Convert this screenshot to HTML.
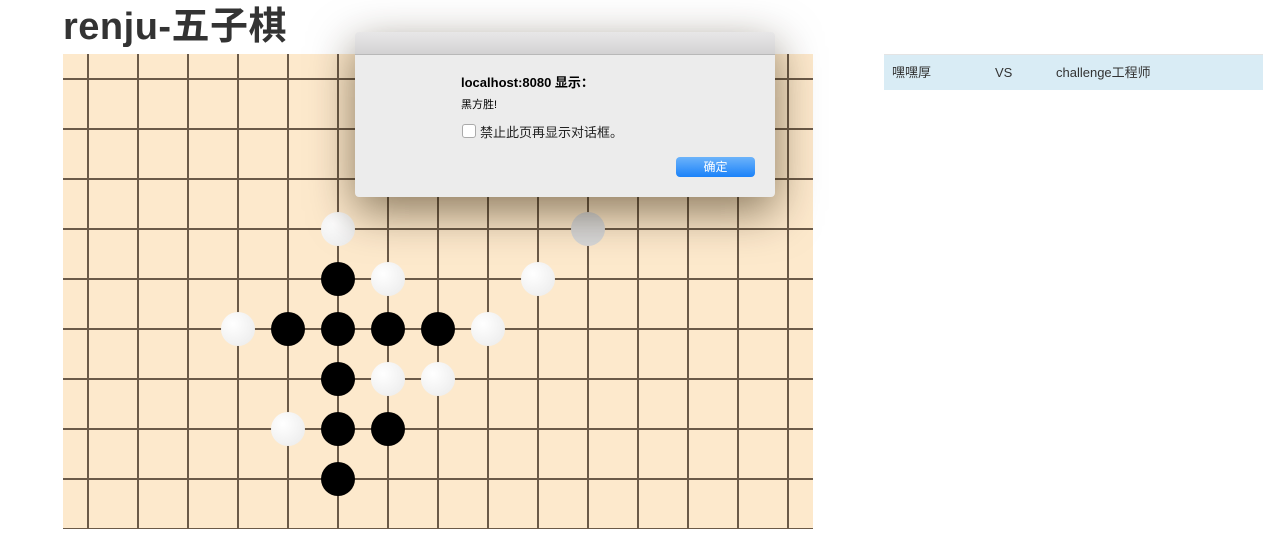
<!DOCTYPE html>
<html><head><meta charset="utf-8"><style>
body{margin:0;width:1267px;height:529px;background:#fff;overflow:hidden;position:relative;font-family:"Liberation Sans","Noto Sans CJK SC",sans-serif}
h1{position:absolute;left:63px;top:5px;margin:0;font-size:38px;font-weight:bold;color:#333;line-height:44px;letter-spacing:0.5px}
#board{position:absolute;left:63px;top:54px;width:750px;height:475px;background:#fde9cc}
.p{position:absolute;left:884px;top:54px;width:379px;height:36px;background:#d9ecf5;font-size:13px;color:#333;border-top:1px solid #e4e4e4;box-sizing:border-box}
.p span{position:absolute;top:0;line-height:36px;height:36px}
.dlg{position:absolute;left:355px;top:32px;width:420px;height:165px;background:#ececec;border-radius:4px;box-shadow:0 14px 45px rgba(40,25,0,.55);overflow:hidden}
.tb{height:22px;background:linear-gradient(#e8e7e8,#d3d2d3);border-bottom:1px solid #b8b8b8}
.btn{position:absolute;left:321px;top:125px;width:79px;height:20px;border-radius:4px;background:linear-gradient(#6cb3fa,#1b82f9);color:#fff;font-size:12px;text-align:center;line-height:20px}
</style></head><body>
<h1>renju-五子棋</h1>
<div id="board"><svg width="750" height="475">
<defs><radialGradient id="w" cx="0.35" cy="0.35" r="0.8"><stop offset="0" stop-color="#fff"/><stop offset="1" stop-color="#ececec"/></radialGradient></defs>
<g stroke="#6b5a48" stroke-width="2">
<line x1="25" y1="0" x2="25" y2="475"/><line x1="75" y1="0" x2="75" y2="475"/><line x1="125" y1="0" x2="125" y2="475"/><line x1="175" y1="0" x2="175" y2="475"/><line x1="225" y1="0" x2="225" y2="475"/><line x1="275" y1="0" x2="275" y2="475"/><line x1="325" y1="0" x2="325" y2="475"/><line x1="375" y1="0" x2="375" y2="475"/><line x1="425" y1="0" x2="425" y2="475"/><line x1="475" y1="0" x2="475" y2="475"/><line x1="525" y1="0" x2="525" y2="475"/><line x1="575" y1="0" x2="575" y2="475"/><line x1="625" y1="0" x2="625" y2="475"/><line x1="675" y1="0" x2="675" y2="475"/><line x1="725" y1="0" x2="725" y2="475"/>
<line x1="0" y1="25" x2="750" y2="25"/><line x1="0" y1="75" x2="750" y2="75"/><line x1="0" y1="125" x2="750" y2="125"/><line x1="0" y1="175" x2="750" y2="175"/><line x1="0" y1="225" x2="750" y2="225"/><line x1="0" y1="275" x2="750" y2="275"/><line x1="0" y1="325" x2="750" y2="325"/><line x1="0" y1="375" x2="750" y2="375"/><line x1="0" y1="425" x2="750" y2="425"/><line x1="0" y1="475" x2="750" y2="475"/>
</g>
<g fill="url(#w)"><circle cx="275" cy="175" r="17"/><circle cx="525" cy="175" r="17" fill="#d8d8d8"/><circle cx="325" cy="225" r="17"/><circle cx="475" cy="225" r="17"/><circle cx="175" cy="275" r="17"/><circle cx="425" cy="275" r="17"/><circle cx="325" cy="325" r="17"/><circle cx="375" cy="325" r="17"/><circle cx="225" cy="375" r="17"/></g>
<g fill="#000"><circle cx="275" cy="225" r="17"/><circle cx="225" cy="275" r="17"/><circle cx="275" cy="275" r="17"/><circle cx="325" cy="275" r="17"/><circle cx="375" cy="275" r="17"/><circle cx="275" cy="325" r="17"/><circle cx="275" cy="375" r="17"/><circle cx="325" cy="375" r="17"/><circle cx="275" cy="425" r="17"/></g>
</svg></div>
<div class="p"><span style="left:8px">嘿嘿厚</span><span style="left:111px">VS</span><span style="left:172px">challenge工程师</span></div>
<div class="dlg"><div class="tb"></div>
<div style="position:absolute;left:106px;top:40px;font-size:13px;font-weight:bold;color:#000">localhost:8080 显示：</div>
<div style="position:absolute;left:106px;top:64px;font-size:11px;color:#000">黑方胜!</div>
<div style="position:absolute;left:107px;top:92px;width:12px;height:12px;border:1px solid #aaa;border-radius:3px;background:#fff"></div>
<div style="position:absolute;left:125px;top:90px;font-size:13px;color:#222">禁止此页再显示对话框。</div>
<div class="btn">确定</div></div>
</body></html>
